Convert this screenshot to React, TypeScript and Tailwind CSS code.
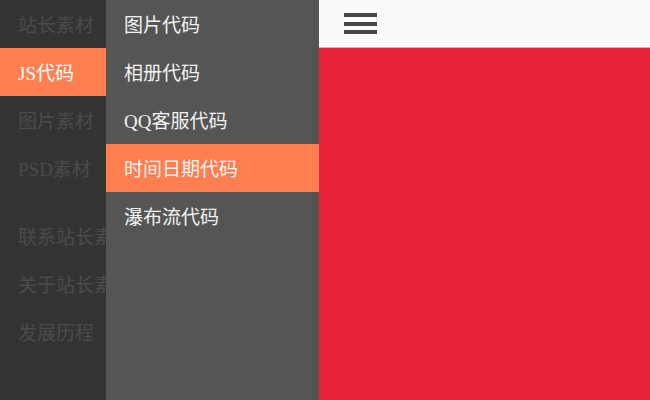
const mainNav = ["站长素材", "JS代码", "图片素材", "PSD素材"];
const aboutNav = ["联系站长素材", "关于站长素材", "发展历程"];
const subNav = ["图片代码", "相册代码", "QQ客服代码", "时间日期代码", "瀑布流代码"];

const font = {
  fontFamily: '"Liberation Serif", "Noto Sans CJK SC", serif',
};

export default function App() {
  return (
    <div className="flex h-[400px] w-[650px] overflow-hidden" style={font}>
      <aside className="w-[106px] shrink-0 overflow-hidden whitespace-nowrap bg-[#333333] text-[19px]">
        <ul>
          {mainNav.map((item) => (
            <li
              key={item}
              className={`flex h-12 items-center pl-[18px] pt-1 ${
                item === "JS代码" ? "bg-[#ff7f50] text-white" : "text-[#4b4b4b]"
              }`}
            >
              {item}
            </li>
          ))}
        </ul>
        <ul className="mt-5">
          {aboutNav.map((item) => (
            <li key={item} className="flex h-12 items-center pl-[18px] pt-1 text-[#4b4b4b]">
              {item}
            </li>
          ))}
        </ul>
      </aside>

      <nav className="w-[213px] shrink-0 whitespace-nowrap bg-[#555555] text-[19px] text-[#f2f2f2]">
        <ul>
          {subNav.map((item) => (
            <li
              key={item}
              className={`flex h-12 items-center pl-[18px] pt-1 ${
                item === "时间日期代码" ? "bg-[#ff7f50]" : ""
              }`}
            >
              {item}
            </li>
          ))}
        </ul>
      </nav>

      <main className="flex flex-1 flex-col bg-[#e8243a]">
        <header className="flex h-12 items-center border-b border-[#e7a7ad] bg-[#fafafa] pl-[25px]">
          <button className="flex w-[33px] flex-col gap-[4.5px]" aria-label="menu">
            <span className="h-1 bg-[#474747]" />
            <span className="h-1 bg-[#474747]" />
            <span className="h-1 bg-[#474747]" />
          </button>
        </header>
      </main>
    </div>
  );
}
